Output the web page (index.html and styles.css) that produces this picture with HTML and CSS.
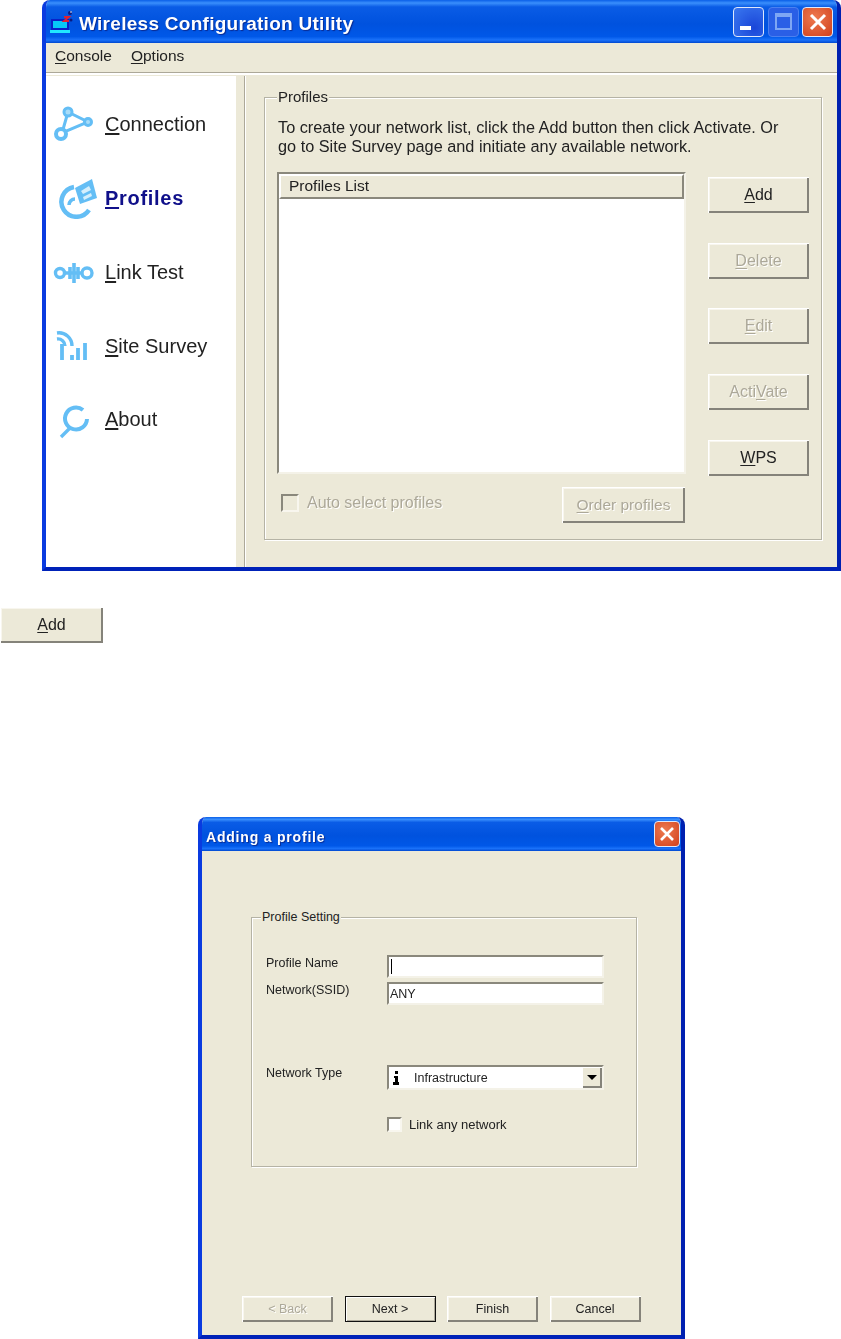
FILE: index.html
```html
<!DOCTYPE html>
<html>
<head lang="en">
    <meta charset="UTF-8">
    <title>Wireless Configuration Utility</title>
    <link rel="stylesheet" href="styles.css">
</head>
<body>
<div class="win main-win">
    <div class="titlebar main-title">
        <svg class="app-icon" width="24" height="24" viewBox="0 0 24 24">
            <rect x="3" y="10" width="16" height="9" fill="#06c8f8" stroke="#0a20c8" stroke-width="2"/>
            <rect x="1" y="20" width="20" height="3" fill="#20e8ff"/>
            <path d="M15 7h5l-5 4h5" fill="none" stroke="#e02030" stroke-width="1.8"/>
            <circle cx="21" cy="3" r="2" fill="#0a1a80"/>
            <circle cx="22" cy="10" r="1.5" fill="#0a1a80"/>
            <circle cx="22" cy="2" r="0.8" fill="#fff"/>
        </svg>
        <span class="title-text">Wireless Configuration Utility</span>
        <div class="win-btns">
            <span class="win-btn"><i class="min-mark"></i></span>
            <span class="win-btn off"><i class="max-mark"></i></span>
            <span class="win-btn close">
                <svg width="20" height="20" viewBox="0 0 20 20"><path d="M3 3l14 14M17 3L3 17" stroke="#fff" stroke-width="3"/></svg>
            </span>
        </div>
    </div>
    <div class="menubar">
        <span><u>C</u>onsole</span>
        <span><u>O</u>ptions</span>
    </div>
    <div class="main-body">
        <div class="sidebar">
            <div class="nav-item">
                <svg class="nav-icon" viewBox="0 0 46 40">
                    <path d="M16 7L36 17L10 28Z" fill="none" stroke="#64bef5" stroke-width="3"/>
                    <circle cx="16" cy="7" r="4" fill="#a8dcf8" stroke="#64bef5" stroke-width="3"/>
                    <circle cx="36" cy="17" r="3.5" fill="#a8dcf8" stroke="#64bef5" stroke-width="3"/>
                    <circle cx="9" cy="29" r="5" fill="#fff" stroke="#64bef5" stroke-width="4"/>
                </svg>
                <span><u>C</u>onnection</span>
            </div>
            <div class="nav-item active">
                <svg class="nav-icon" viewBox="0 0 46 40">
                    <path d="M22 8A15 15 0 1 0 37 31" fill="none" stroke="#64bef5" stroke-width="4.5"/>
                    <path d="M17 26A6 6 0 0 1 23 20" fill="none" stroke="#64bef5" stroke-width="3.5"/>
                    <path d="M23 9L40 0L45 19L28 25Z" fill="#64bef5"/>
                    <path d="M29 12L37 7L39 11L31 15ZM31 18L39 14L40 17L32 21Z" fill="#d6effc"/>
                </svg>
                <span><u>P</u>rofiles</span>
            </div>
            <div class="nav-item">
                <svg class="nav-icon" viewBox="0 0 46 40">
                    <circle cx="8" cy="21" r="4.5" fill="none" stroke="#64bef5" stroke-width="3.4"/>
                    <circle cx="35" cy="21" r="5" fill="none" stroke="#64bef5" stroke-width="3.4"/>
                    <path d="M12 21H30" stroke="#64bef5" stroke-width="3.4"/>
                    <path d="M18 15V27M22 11V31M26 15V27" stroke="#64bef5" stroke-width="3.6"/>
                </svg>
                <span><u>L</u>ink Test</span>
            </div>
            <div class="nav-item">
                <svg class="nav-icon" viewBox="0 0 46 40">
                    <path d="M5 7A13 13 0 0 1 20 20" fill="none" stroke="#64bef5" stroke-width="3.4"/>
                    <path d="M5 13A7 7 0 0 1 13 20" fill="none" stroke="#64bef5" stroke-width="3.4"/>
                    <path d="M10 18V34M20 29V34M26 22V34M33 17V34" stroke="#64bef5" stroke-width="3.8"/>
                </svg>
                <span><u>S</u>ite Survey</span>
            </div>
            <div class="nav-item">
                <svg class="nav-icon" viewBox="0 0 46 40">
                    <path d="M31 10A11 11 0 1 0 35 19" fill="none" stroke="#64bef5" stroke-width="4"/>
                    <path d="M18 28L9 37" stroke="#64bef5" stroke-width="3.4"/>
                </svg>
                <span><u>A</u>bout</span>
            </div>
        </div>
        <div class="divider"></div>
        <div class="group profiles-group">
            <span class="group-title">Profiles</span>
            <p class="intro">To create your network list, click the Add button then click Activate. Or<br>go to Site Survey page and initiate any available network.</p>
            <div class="list-row">
                <div class="list-col">
                    <div class="list">
                        <div class="list-head">Profiles List</div>
                    </div>
                    <div class="list-foot">
                        <label class="check disabled"><i class="box"></i>Auto select profiles</label>
                        <button class="btn disabled order-btn"><u>O</u>rder profiles</button>
                    </div>
                </div>
                <div class="btn-col">
                    <button class="btn"><u>A</u>dd</button>
                    <button class="btn disabled"><u>D</u>elete</button>
                    <button class="btn disabled"><u>E</u>dit</button>
                    <button class="btn disabled">Acti<u>V</u>ate</button>
                    <button class="btn"><u>W</u>PS</button>
                </div>
            </div>
        </div>
    </div>
</div>

<button class="btn lone-add"><u>A</u>dd</button>

<div class="win dialog">
    <div class="titlebar dialog-title">
        <span class="title-text">Adding a profile</span>
        <span class="win-btn close">
            <svg width="16" height="16" viewBox="0 0 16 16"><path d="M2 2l12 12M14 2L2 14" stroke="#fff" stroke-width="2.6"/></svg>
        </span>
    </div>
    <div class="dialog-body">
        <div class="group setting-group">
            <span class="group-title">Profile Setting</span>
            <div class="form-row">
                <label>Profile Name</label>
                <div class="field"><i class="caret"></i></div>
            </div>
            <div class="form-row row-ssid">
                <label>Network(SSID)</label>
                <div class="field">ANY</div>
            </div>
            <div class="form-row row-type">
                <label>Network Type</label>
                <div class="field select">
                    <svg class="type-icon" width="9" height="16" viewBox="0 0 9 16">
                        <rect x="3" y="1" width="3" height="3"/>
                        <path d="M2 6H6V12H7V15H1V12H3V8H2Z"/>
                    </svg>
                    <span>Infrastructure</span>
                    <span class="drop"><i></i></span>
                </div>
            </div>
            <div class="form-row row-link">
                <span></span>
                <label class="check small"><i class="box"></i>Link any network</label>
            </div>
        </div>
        <div class="dialog-foot">
            <button class="btn disabled">&lt; Back</button>
            <button class="btn default">Next &gt;</button>
            <button class="btn">Finish</button>
            <button class="btn">Cancel</button>
        </div>
    </div>
</div>
</body>
</html>
```
FILE: styles.css
```css
*{
    padding: 0;
    margin: 0;
    box-sizing: border-box;
}
body{
    background-color: #fff;
    font-family: "Liberation Sans", Arial, sans-serif;
    color: #222;
    width: 841px;
}
u{
    text-underline-offset: 2px;
}
i{
    display: block;
}

/* window frame */
.win{
    background-color: #ece9d8;
    border-radius: 8px 8px 0 0;
    overflow: hidden;
    border-left: 4px solid #0a3be0;
    border-right: 4px solid #0020b0;
    border-bottom: 4px solid #0022b8;
    filter: blur(0.4px);
}
.main-win{
    margin-left: 42px;
    width: 799px;
    height: 571px;
}
.titlebar{
    display: flex;
    align-items: center;
    margin: 0 -4px;
    background: linear-gradient(#0a5fe8 0%, #3a8ffc 7%, #0a5ce6 16%, #0052de 55%, #0058e8 85%, #1a72fa 93%, #0048d0 100%);
    color: #fff;
    font-weight: bold;
}
.main-title{
    height: 43px;
    padding: 0 8px 0 7px;
}
.app-icon{
    margin-right: 6px;
}
.title-text{
    text-shadow: 1px 1px 1px #0a2a90;
    padding-top: 5px;
}
.main-title .title-text{
    font-size: 19px;
    letter-spacing: 0.28px;
}
.win-btns{
    margin-left: auto;
    display: flex;
    gap: 3.5px;
}
.win-btn{
    width: 31px;
    height: 30px;
    border: 1px solid #dfe8fb;
    border-radius: 4px;
    background: radial-gradient(circle at 70% 70%, #1a46d8, #3a78f0);
    display: flex;
    align-items: center;
    justify-content: center;
    position: relative;
}
.win-btn.off{
    border-color: #4a80f0;
    background: #2a5fe6;
}
.win-btn.close{
    background: radial-gradient(circle at 40% 35%, #ee7a50, #d0401c);
}
.min-mark{
    width: 11px;
    height: 4px;
    background-color: #fff;
    position: absolute;
    left: 6px;
    bottom: 6px;
}
.max-mark{
    width: 17px;
    height: 17px;
    border: 2px solid #7ea6f4;
    border-top-width: 4px;
}

.menubar{
    height: 32px;
    padding: 0 0 4px 9px;
    display: flex;
    align-items: center;
    gap: 19px;
    font-size: 15.5px;
    border-bottom: 2px solid #fff;
    box-shadow: inset 0 -1px 0 #aca899;
}
.main-body{
    display: flex;
    height: 492px;
    padding-top: 1px;
}

/* left column */
.sidebar{
    width: 190px;
    background-color: #fff;
    padding-top: 12px;
}
.nav-item{
    height: 73.75px;
    display: flex;
    align-items: center;
    font-size: 20px;
    padding-left: 6px;
}
.nav-item.active{
    color: #10108a;
    font-weight: bold;
    letter-spacing: 0.7px;
}
.nav-icon{
    width: 46px;
    height: 40px;
    margin-right: 7px;
    flex: none;
}
.divider{
    width: 2px;
    margin-left: 8px;
    background-color: #aca899;
    border-right: 1px solid #fff;
}

/* group boxes */
.group{
    position: relative;
    border: 1px solid #b5b3a5;
    box-shadow: 1px 1px 0 #fff, inset 1px 1px 0 #fff;
}
.group-title{
    position: absolute;
    top: -10px;
    left: 12px;
    padding: 0 1px;
    background-color: #ece9d8;
    line-height: 17px;
    font-size: 15px;
}
.profiles-group{
    width: 558px;
    height: 443px;
    margin: 21px 0 0 18px;
    padding: 20px 12px 0;
}
.intro{
    font-size: 16.3px;
    line-height: 19px;
    padding-left: 1px;
    height: 54px;
}
.list-row{
    display: flex;
    gap: 22px;
}
.list-col{
    width: 409px;
}
.list{
    height: 302px;
    background-color: #fff;
    border: 2px solid #8a887c;
    border-right-color: #f4f2e8;
    border-bottom-color: #f4f2e8;
}
.list-head{
    height: 25px;
    width: 405px;
    background-color: #ece9d8;
    border: 2px solid;
    border-color: #fff #8a887c #8a887c #fff;
    padding-left: 8px;
    font-size: 15.5px;
    line-height: 20px;
}
.list-foot{
    display: flex;
    justify-content: space-between;
    margin-top: 13px;
}
.check{
    display: flex;
    align-items: center;
    gap: 8px;
    height: 31px;
    font-size: 16px;
    padding-left: 4px;
}
.box{
    width: 18px;
    height: 18px;
    border: 2px solid #8a887c;
    border-right-color: #f8f6ee;
    border-bottom-color: #f8f6ee;
}
.check.disabled{
    color: #aca899;
    text-shadow: 1px 1px 0 #fff;
}
.btn-col{
    display: flex;
    flex-direction: column;
    gap: 29.7px;
    padding-top: 5px;
}

/* buttons */
.btn{
    width: 101px;
    height: 36px;
    font-family: inherit;
    font-size: 16px;
    color: #222;
    background-color: #ece9d8;
    border: 0;
    box-shadow: inset 1px 1px 0 #fff, inset -2px -2px 0 #85837a, inset 2px 2px 0 #f8f6ee;
}
.btn.disabled{
    color: #aca899;
    text-shadow: 1px 1px 0 #fff;
}
.order-btn{
    width: 123px;
    margin-right: 1px;
    font-size: 15.5px;
}
.lone-add{
    display: block;
    width: 103px;
    margin-top: 36px;
    filter: blur(0.4px);
}

/* dialog */
.dialog{
    margin: 174px 0 0 198px;
    width: 487px;
    height: 522px;
    display: flex;
    flex-direction: column;
}
.dialog-title{
    height: 34px;
    padding: 0 5px 0 8px;
    justify-content: space-between;
}
.dialog-title .title-text{
    font-size: 14px;
    letter-spacing: 0.8px;
}
.dialog-title .win-btn{
    width: 26px;
    height: 26px;
}
.dialog-body{
    flex: 1;
    display: flex;
    flex-direction: column;
}
.setting-group{
    width: 386px;
    height: 250px;
    margin: 66px 0 0 49px;
    padding: 37px 14px 0;
    font-size: 12.5px;
}
.setting-group .group-title{
    font-size: 12.5px;
    left: 9px;
    top: -9px;
}
.form-row{
    display: grid;
    grid-template-columns: 121px 217px;
}
.form-row label{
    line-height: 16px;
}
.row-ssid{
    margin-top: 4px;
}
.row-type{
    margin-top: 60px;
}
.row-link{
    margin-top: 27px;
}
.field{
    height: 23px;
    background-color: #fff;
    border: 2px solid #8a887c;
    border-right-color: #f4f2e8;
    border-bottom-color: #f4f2e8;
    line-height: 20px;
    padding-left: 1px;
    font-size: 12.5px;
}
.caret{
    width: 1px;
    height: 15px;
    margin: 2px 0 0 1px;
    background-color: #000;
}
.select{
    height: 25px;
    display: flex;
    align-items: center;
    padding-left: 3px;
}
.type-icon{
    margin-right: 13px;
}
.drop{
    margin-left: auto;
    width: 20px;
    height: 21px;
    background-color: #ece9d8;
    box-shadow: inset 1px 1px 0 #fff, inset -2px -2px 0 #85837a;
    display: flex;
    align-items: center;
    justify-content: center;
}
.drop i{
    border-style: solid;
    border-width: 5px 5px 0;
    border-color: #000 transparent transparent;
}
.check.small{
    height: 15px;
    padding-left: 0;
    gap: 7px;
    font-size: 13px;
}
.check.small .box{
    width: 15px;
    height: 15px;
    background-color: #fff;
}
.dialog-foot{
    margin-top: auto;
    padding: 0 0 13px 40px;
    display: flex;
    gap: 11.5px;
}
.dialog-foot .btn{
    width: 91px;
    height: 26px;
    font-size: 12.5px;
}
.btn.default{
    box-shadow: inset 0 0 0 1px #111, inset 2px 2px 0 #fff, inset -2px -2px 0 #aca899;
}
```
